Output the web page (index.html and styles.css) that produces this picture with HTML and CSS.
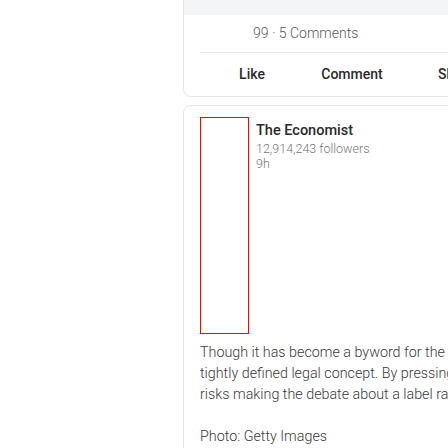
FILE: index.html
```html
<!DOCTYPE html>
<html>
<head>
<meta charset="utf-8">
<link rel="stylesheet" href="styles.css">
</head>
<body>
<div class="feed">
  <div class="card card-top">
    <div class="media"></div>
    <div class="stats">99 · 5 Comments</div>
    <div class="divider"></div>
    <div class="actions">
      <div class="action">Like</div>
      <div class="action">Comment</div>
      <div class="action">Share</div>
    </div>
  </div>
  <div class="card post">
    <div class="post-head">
      <div class="avatar"></div>
      <div class="meta">
        <div class="name">The Economist</div>
        <div class="sub">12,914,243 followers</div>
        <div class="sub">9h</div>
      </div>
    </div>
    <div class="body">Though it has become a byword for the worst of crimes, genocide is a<br>tightly defined legal concept. By pressing the charge, South Africa<br>risks making the debate about a label rather than the suffering<br><br>Photo: Getty Images</div>
  </div>
</div>
</body>
</html>
```

FILE: styles.css
```css
html, body {
  margin: 0;
  padding: 0;
  background: #ffffff;
  overflow: hidden;
}

body {
  font-family: "Roboto", "Noto Sans", sans-serif;
  font-weight: 300;
  color: #333333;
}

.feed {
  margin-left: 183px;
  width: 560px;
  margin-top: -40px;
}

.card {
  border: 1px solid #e6e6e6;
  border-radius: 8px;
  background: #ffffff;
  overflow: hidden;
}

.media {
  height: 54px;
  background: #f4f5f7;
}

.stats {
  height: 37px;
  line-height: 37px;
  padding-left: 69px;
  font-size: 14px;
  color: #5a5a5a;
}

.divider {
  height: 1px;
  background: #e8e8e8;
  margin: 0 16px;
}

.actions {
  display: flex;
  height: 43px;
  padding-left: 18px;
}

.action {
  width: 100px;
  text-align: center;
  line-height: 43px;
  font-size: 14px;
  font-weight: 500;
  color: #2a2a2a;
}

.action:last-child {
  margin-left: 4px;
}

.post {
  margin-top: 8px;
  padding: 11px 16px 20px;
}

.post-head {
  display: flex;
  gap: 7px;
}

.avatar {
  width: 49px;
  height: 217px;
  box-sizing: border-box;
  border: 1px solid #ff0000;
  flex: none;
}

.meta {
  padding-top: 4px;
}

.name {
  font-size: 14.5px;
  font-weight: 500;
  line-height: 20px;
  color: #2a2a2a;
}

.sub {
  font-size: 12.5px;
  line-height: 15px;
  color: #777777;
}

.body {
  margin-top: 8px;
  font-size: 14.3px;
  line-height: 21px;
  color: #3a3a3a;
  white-space: nowrap;
}
```
